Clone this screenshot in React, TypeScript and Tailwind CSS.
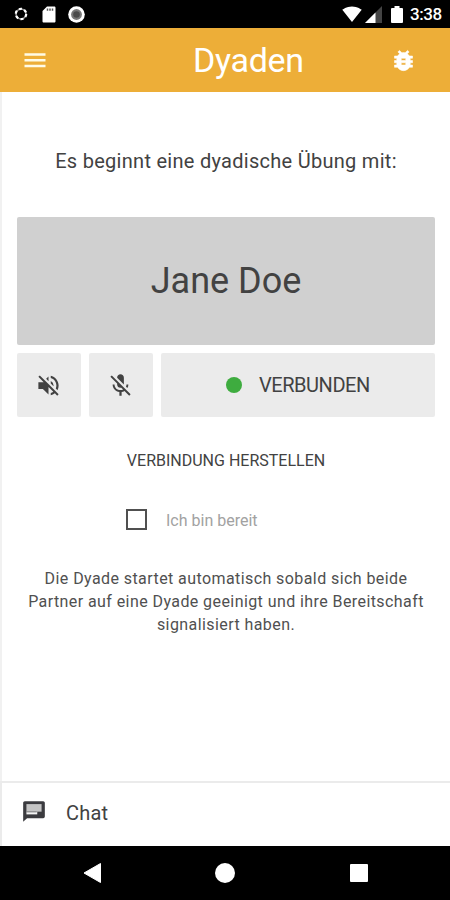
import React from 'react';
import { MdMicOff, MdVolumeOff, MdSignalWifi4Bar } from 'react-icons/md';

function StatusBar() {
  return (
    <div className="flex h-7 items-center bg-black text-white">
      <svg className="ml-[14px] size-[14px]" viewBox="0 0 14 14">
        <circle cx="7" cy="7" r="5" fill="none" stroke="#999" strokeWidth="1.6" />
        <circle cx="7" cy="7" r="5.2" fill="none" stroke="#fff" strokeWidth="2.2" strokeDasharray="3 2.445" />
      </svg>
      <svg className="ml-[14px] h-[17px] w-[14px]" viewBox="0 0 14 17">
        <path d="M5 .5h7.2c.8 0 1.3.5 1.3 1.3v13.4c0 .8-.5 1.3-1.3 1.3H1.8c-.8 0-1.3-.5-1.3-1.3V5z" fill="#fff" />
        <path d="M5.5 2.5v2.2M8 2.5v2.2M10.5 2.5v2.2" stroke="#555" strokeWidth="1.5" />
      </svg>
      <svg className="ml-[12px] size-[17px]" viewBox="0 0 17 17">
        <circle cx="8.5" cy="8.5" r="8.3" fill="#fff" />
        <circle cx="8.5" cy="8.5" r="5.4" fill="#777" />
        <circle cx="8.5" cy="8.5" r="3.3" fill="#4a4a4a" />
      </svg>
      <MdSignalWifi4Bar className="ml-auto h-[20px] w-[20px]" />
      <svg className="ml-[3px] size-[17px]" viewBox="0 0 17 17">
        <path d="M17 0v17H0z" fill="#444" />
        <path d="M10.5 6.5V17H0z" fill="#fff" />
      </svg>
      <svg className="ml-[9px] h-[17px] w-[12px]" viewBox="0 0 12 17">
        <path d="M3.5 0h5v2H11q1 0 1 1v13q0 1-1 1H1q-1 0-1-1V3q0-1 1-1h2.5z" fill="#fff" />
      </svg>
      <span className="ml-[7px] mr-[8px] w-[32px] whitespace-nowrap text-[17px] font-medium leading-none tracking-[-0.4px]">3:38</span>
    </div>
  );
}

function BugIcon() {
  return (
    <svg className="ml-[84px] size-[27px]" viewBox="0 0 24 24">
      <path
        fill="#fff"
        stroke="#fff"
        strokeWidth="0.5"
        d="M20 8h-2.81a5.985 5.985 0 0 0-1.82-1.96L17 4.41 15.59 3l-2.17 2.17a6.002 6.002 0 0 0-2.83 0L8.41 3 7 4.41l1.62 1.63C7.88 6.55 7.26 7.22 6.81 8H4v2h2.09c-.05.33-.09.66-.09 1v1H4v2h2v1c0 .34.04.67.09 1H4v2h2.81c1.04 1.79 2.97 3 5.19 3s4.15-1.21 5.19-3H20v-2h-2.09c.05-.33.09-.66.09-1v-1h2v-2h-2v-1c0-.34-.04-.67-.09-1H20V8zm-6 8h-4v-2h4v2zm0-4h-4v-2h4v2z"
      />
    </svg>
  );
}

function ChatIcon() {
  return (
    <svg className="size-[26px]" viewBox="0 0 24 24">
      <path d="M20.5 2H3.5C2.7 2 2 2.7 2 3.5V21l3.6-3.3h14.9c.8 0 1.5-.7 1.5-1.5V3.5c0-.8-.7-1.5-1.5-1.5z" fill="#3b3b3f" />
      <path d="M5 4.7h14v7H5z" fill="#c4c4c4" />
      <path d="M5 11.7h10v2.5H5z" fill="#f5f5f5" />
      <path d="M5 11.9h9.5" stroke="#77777a" strokeWidth=".8" />
    </svg>
  );
}

export default function App() {
  return (
    <div className="relative flex h-[900px] w-[450px] flex-col overflow-hidden bg-white font-[Roboto,sans-serif] text-[#424242]">
      <StatusBar />
      <header className="flex h-16 items-center bg-[#edae38] text-white">
        <svg className="ml-[24px] h-4 w-[22px]" viewBox="0 0 22 16">
          <path d="M.5 2.5h21M.5 8.3h21M.5 14h21" stroke="#fffbe6" strokeWidth="2.5" />
        </svg>
        <h1 className="ml-[147px] w-[113px] whitespace-nowrap text-[34px] leading-none tracking-[-0.3px]">Dyaden</h1>
        <BugIcon />
      </header>
      <main className="flex flex-1 flex-col border-l-2 border-[#f1f1f1] pl-[15px] pr-[15px]">
        <p className="mt-[56px] whitespace-nowrap text-center text-[20px] leading-[26px] tracking-[0.28px]">Es beginnt eine dyadische Übung mit:</p>
        <div className="mt-[43px] flex h-32 items-center justify-center rounded-[2px] bg-[#d0d0d0] text-[36px]">Jane Doe</div>
        <div className="mt-2 flex h-16 gap-2">
          <div className="flex w-16 items-center justify-center rounded-[2px] bg-[#ebebeb]"><MdVolumeOff className="mr-px size-[27px]" /></div>
          <div className="flex w-16 items-center justify-center rounded-[2px] bg-[#ebebeb]"><MdMicOff className="mr-px size-[27px]" /></div>
          <div className="flex flex-1 items-center rounded-[2px] bg-[#ebebeb]">
            <span className="ml-[65px] size-4 rounded-full bg-[#3eac3f]" />
            <span className="ml-[17px] whitespace-nowrap text-[20px] tracking-[-0.45px]">VERBUNDEN</span>
          </div>
        </div>
        <p className="mt-[33px] text-center text-[16px] leading-[22px]">VERBINDUNG HERSTELLEN</p>
        <div className="mt-[36px] flex h-[22px] items-center">
          <span className="ml-[109px] size-[21px] border-2 border-[#505050]" />
          <span className="ml-[19px] pt-[3px] text-[16px] text-[#a2a2a2]">Ich bin bereit</span>
        </div>
        <p className="mt-[37px] whitespace-nowrap text-center text-[16px] leading-[23px] tracking-[0.42px] text-[#505050]">
          Die Dyade startet automatisch sobald sich beide<br />Partner auf eine Dyade geeinigt und ihre Bereitschaft<br />signalisiert haben.
        </p>
      </main>
      <section className="flex h-[65px] items-center border-l-2 border-t-2 border-[#ebebeb]">
        <div className="ml-[19px] mt-[-6px]"><ChatIcon /></div>
        <span className="ml-[19px] mt-[-3px] text-[20px] tracking-[0.2px]">Chat</span>
      </section>
      <nav className="flex h-[54px] items-center bg-black">
        <svg className="ml-[83px] h-5 w-[18px]" viewBox="0 0 18 20"><path d="M17.5.5v19L1 10z" fill="#fff" stroke="#fff" strokeLinejoin="round" /></svg>
        <span className="ml-[114px] size-5 rounded-full bg-white" />
        <span className="ml-[115px] size-[18px] rounded-[1px] bg-white" />
      </nav>
    </div>
  );
}
